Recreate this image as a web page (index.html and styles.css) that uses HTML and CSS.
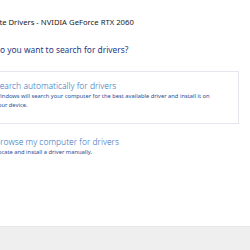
FILE: index.html
```html
<!DOCTYPE html>
<html lang="en">
<head>
    <meta charset="UTF-8">
    <meta name="viewport" content="width=device-width, initial-scale=1.0">
    <title>Update Drivers</title>
    <link rel="stylesheet" href="styles.css">
</head>
<body>
    <div class="dialog">
        <div class="title">Update Drivers - NVIDIA GeForce RTX 2060</div>
        <h2 class="question">How do you want to search for drivers?</h2>

        <div class="option option-active">
            <div class="option-title">Search automatically for drivers</div>
            <div class="option-text">Windows will search your computer for the best available driver and install it on your device.</div>
        </div>

        <div class="option">
            <div class="option-title">Browse my computer for drivers</div>
            <div class="option-text">Locate and install a driver manually.</div>
        </div>
    </div>
    <div class="footer"></div>
</body>
</html>
```

FILE: styles.css
```css
body {
    margin: 0;
    width: 250px;
    height: 250px;
    overflow: hidden;
    background-color: #fff;
    font-family: 'Noto Sans', 'Open Sans', sans-serif;
    display: flex;
    flex-direction: column;
}

.dialog {
    height: 226px;
    margin-left: -40px;
    overflow: hidden;
}

.title {
    padding: 18px 0 0 20px;
    font-size: 7.7px;
    line-height: 9px;
    color: #222;
}

.question {
    margin: 17px 0 0 15px;
    font-size: 8.4px;
    line-height: 12px;
    font-weight: normal;
    color: #1f3a86;
}

.option {
    margin-top: 3px;
    width: 279px;
    padding: 8px 0 8px 34px;
    border: 1px solid transparent;
    box-sizing: border-box;
}

.option-active {
    margin-top: 15px;
    height: 53px;
    border-color: #e4e8ee;
}

.option-title {
    font-size: 8.5px;
    line-height: 12px;
    font-weight: 300;
    color: #3373bb;
}

.option-text {
    width: 228px;
    font-size: 5.75px;
    line-height: 9px;
    color: #1f4e96;
}

.footer {
    flex: 1;
    background-color: #efefef;
    border-top: 1px solid #e6e6e6;
}
```
